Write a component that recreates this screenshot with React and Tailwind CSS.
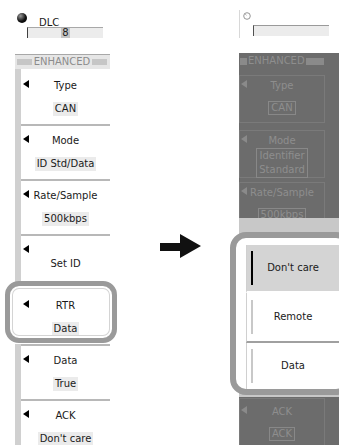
import React from "react";

const leftRows = [
  { label: "Type", value: "CAN", first: true },
  { label: "Mode", value: "ID Std/Data" },
  { label: "Rate/Sample", value: "500kbps" },
  { label: "Set ID" },
  { label: "RTR", value: "Data", hl: true },
  { label: "Data", value: "True" },
  { label: "ACK", value: "Don't care" },
];

const Tri = ({ color }) => (
  <svg width="6" height="8" viewBox="0 0 6 8">
    <polygon points="6,0 0,4 6,8" fill={color} />
  </svg>
);

const LeftRow = ({ label, value, first, hl }) => (
  <div className="flex h-[55px] shrink-0">
    <div className={hl ? "w-[6px] bg-white" : "w-[6px] bg-[#d0d0d0]"} />
    <div
      className={`flex-1 flex flex-col border-t-2 pt-[8px] ${
        first || hl ? "border-white" : "border-[#b8b8b8]"
      }`}
    >
      <div className="grid grid-cols-[8px_1fr_8px] items-start">
        <div className="pl-[2px] pt-[1px]">
          <Tri color="#000" />
        </div>
        <div className={`text-center leading-[14px] ${value ? "" : "mt-[13px]"}`}>{label}</div>
      </div>
      {value && (
        <div className="mt-[9px] self-center bg-[#ebebeb] px-[2px] leading-[14px]">{value}</div>
      )}
    </div>
  </div>
);

const RightRow = ({ label, lines, h = "h-[55px]", pt = "pt-[6px]", boxPt = "pt-[3px]" }) => (
  <div className={`${h} ${pt} shrink-0 overflow-hidden`}>
    <div className={`w-[86px] h-[48px] border border-[#7a7a7a] flex flex-col ${boxPt}`}>
      <div className="grid grid-cols-[8px_1fr_8px] items-start">
        <div className="pl-[1px] pt-[1px]">
          <Tri color="#8a8a8a" />
        </div>
        <div className="text-center leading-[14px]">{label}</div>
      </div>
      <div
        className={`self-center border border-[#888] px-[2px] text-center ${
          lines.length > 1 ? "leading-[14px]" : "mt-[8px] leading-[12px]"
        }`}
      >
        {lines.map((l) => (
          <div key={l}>{l}</div>
        ))}
      </div>
    </div>
  </div>
);

const options = [
  { label: "Don't care", selected: true, h: "h-[48px]", border: "border-white" },
  { label: "Remote", h: "h-[50px]", border: "border-[#a0a0a0]" },
  { label: "Data", h: "h-[48px]", border: "border-transparent" },
];

export default function App() {
  return (
    <div className="relative w-[339px] h-[445px] overflow-hidden bg-white flex font-['DejaVu_Sans',sans-serif] text-[10px] text-[#1a1a1a]">
      {/* left column */}
      <div className="w-[120px] shrink-0 flex flex-col pt-[10px]">
        <div className="ml-[14px] w-[23px] h-px bg-[#b8b8b8]" />
        <div className="ml-[17px] mt-[3px] h-[14px] flex items-start">
          <div className="w-[10px] h-[10px] rounded-full bg-[radial-gradient(circle_at_35%_30%,#9a9a9a,#111_55%,#000)]" />
          <div className="ml-[12px] mt-[4px] leading-[12px]">DLC</div>
        </div>
        <div className="ml-[27px] w-[76px] h-[11px] bg-[#ececec] border-t border-l border-t-[#a8a8a8] border-l-[#404040] flex justify-center">
          <span className="bg-[#c4c4c4] px-px leading-[10px] text-[10px]">8</span>
        </div>
        <div className="ml-[15px] mt-[16px] w-[95px] flex flex-col border-t border-[#a8a8a8]">
          <div className="h-[14px] bg-[#e6e6e6] flex items-center">
            <div className="ml-[2px] w-[15px] h-[6px] bg-[#c6c6c6]" />
            <div className="flex-1 text-center text-[#8c8c8c] leading-[14px]">ENHANCED</div>
            <div className="mr-[3px] w-[15px] h-[6px] bg-[#c6c6c6]" />
          </div>
          {leftRows.map((r) => (
            <LeftRow key={r.label} {...r} />
          ))}
        </div>
      </div>

      {/* arrow */}
      <div className="w-[110px] shrink-0 pt-[234px] pl-[40px]">
        <svg width="42" height="25" viewBox="0 0 42 25">
          <polygon points="0,9 20,9 20,0 41,12 20,24 20,17 0,17" fill="#111" />
        </svg>
      </div>

      {/* right column */}
      <div className="w-[109px] shrink-0 flex flex-col pt-[10px]">
        <div className="ml-[9px] flex">
          <div className="w-px h-[28px] bg-[#d8d8d8]" />
          <div className="flex flex-col">
            <svg className="ml-[3px] mt-[2px]" width="8" height="8" viewBox="0 0 8 8">
              <circle cx="4" cy="4" r="3.3" fill="none" stroke="#8a8a8a" strokeWidth="0.9" />
              <path d="M2.4 2.4 L3.4 3.2" stroke="#8a8a8a" strokeWidth="0.9" />
            </svg>
            <div className="ml-[13px] mt-[5px] w-[76px] h-[11px] bg-[#ececec] border-t border-l border-t-[#9a9a9a] border-l-[#505050]" />
          </div>
        </div>
        <div className="ml-[9px] mt-[15px] flex-1 bg-[#6c6c6c] text-[#8e8e8e] flex flex-col">
          <div className="h-[16px] shrink-0 flex items-center gap-[1px]">
            <div className="ml-[1px] w-[7px] h-[7px] bg-[#8a8a8a]" />
            <div className="leading-[14px]">ENHANCED</div>
            <div className="w-[18px] h-[7px] bg-[#8a8a8a]" />
          </div>
          <RightRow label="Type" lines={["CAN"]} />
          <RightRow label="Mode" lines={["Identifier", "Standard"]} />
          <RightRow label="Rate/Sample" lines={["500kbps"]} h="h-[39px]" pt="pt-[3px]" />
          <div className="h-[179px] shrink-0 bg-[#c8c8c8] pt-[20px]">
            <div className="bg-white pl-[7px] pt-[7px] h-[153px] text-[#1a1a1a] text-[10px]">
              {options.map((o) => (
                <div
                  key={o.label}
                  className={`${o.h} border-b-2 ${o.border} border-l border-l-[#d0d0d0] grid grid-cols-[7px_1fr_7px] items-center ${
                    o.selected ? "bg-[#d4d4d4]" : "bg-white"
                  }`}
                >
                  <div
                    className={`ml-[4px] w-[2px] h-[34px] ${o.selected ? "bg-black" : "bg-[#c8c8c8]"}`}
                  />
                  <div className="text-center leading-[14px]">{o.label}</div>
                </div>
              ))}
            </div>
          </div>
          <RightRow label="ACK" lines={["ACK"]} pt="pt-[1px]" boxPt="pt-[6px]" />
        </div>
      </div>

      {/* highlight rings */}
      <div className="absolute left-[5px] top-[281px] w-[112px] h-[62px] rounded-[14px] border-[5px] border-[#9a9a9a] shadow-[inset_0_0_0_2px_#fff,inset_0_0_0_3px_#d4d4d4] pointer-events-none" />
      <div className="absolute left-[230px] top-[232px] w-[122px] h-[163px] rounded-[16px] border-[6px] border-[#9a9a9a] pointer-events-none" />
    </div>
  );
}
